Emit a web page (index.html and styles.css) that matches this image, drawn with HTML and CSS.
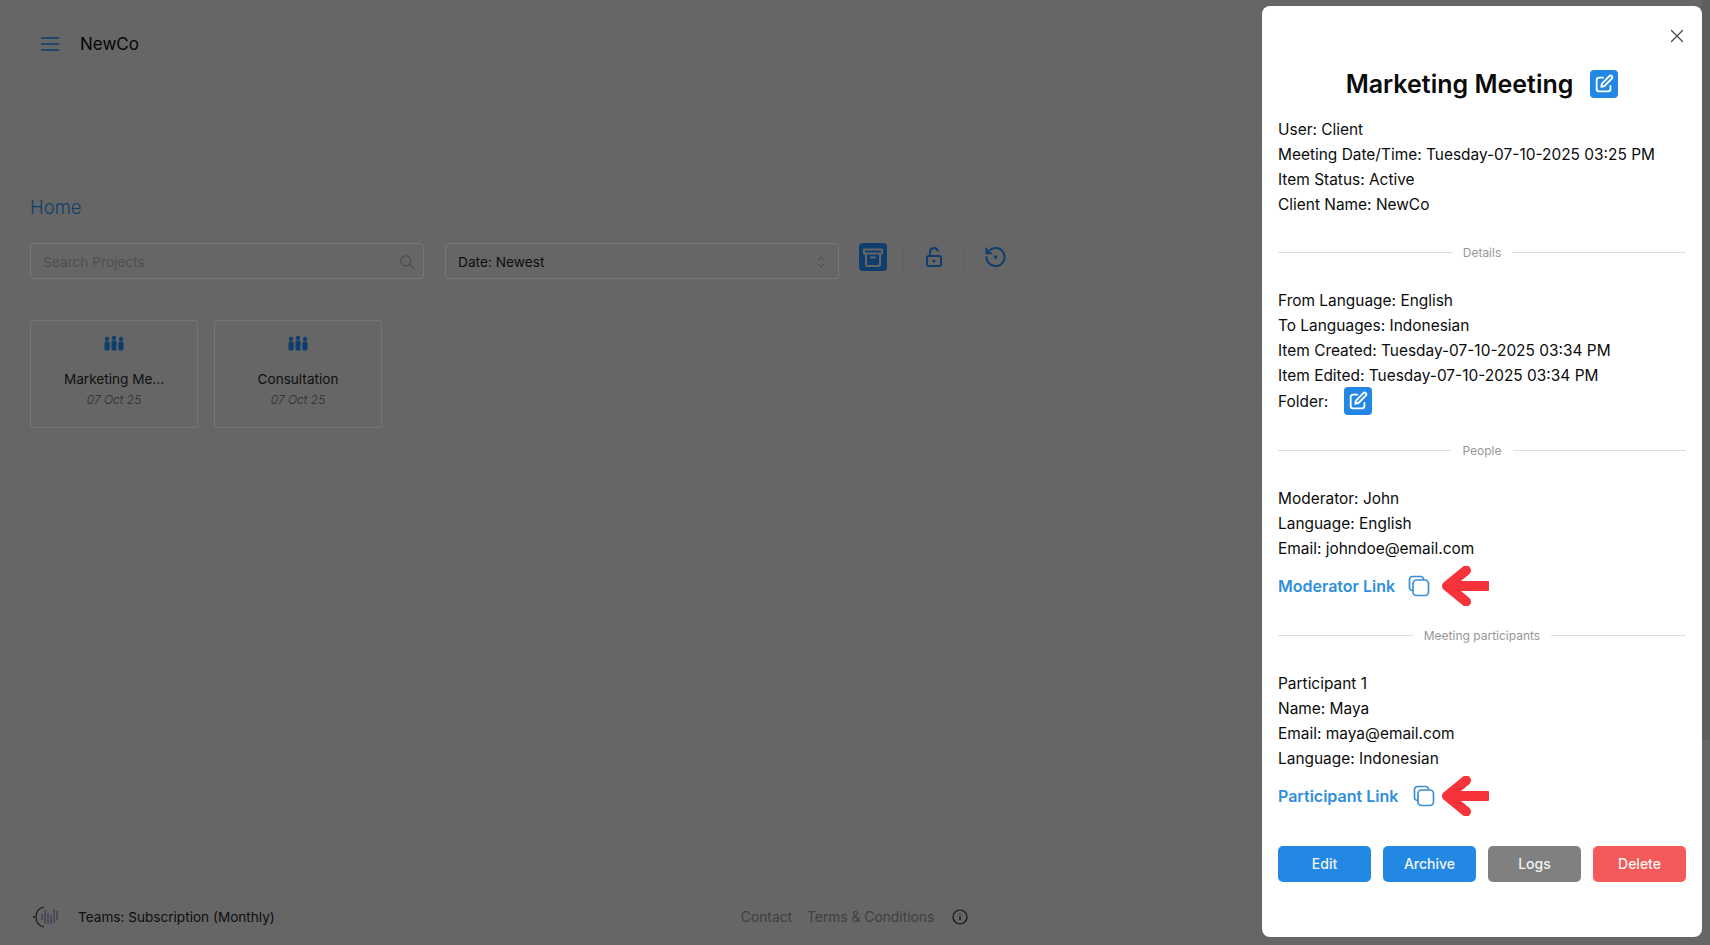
FILE: index.html
```html
<!DOCTYPE html>
<html lang="en">
<head>
<meta charset="utf-8">
<title>NewCo - Marketing Meeting</title>
<link rel="stylesheet" href="styles.css">
</head>
<body>
<div class="app">
  <header class="topbar">
    <button class="menu-btn" aria-label="Menu">
      <svg viewBox="0 0 20 16" width="20" height="16"><path d="M1 2h18M1 8h18M1 14h18" fill="none" stroke="currentColor" stroke-width="1.6"/></svg>
    </button>
    <span class="brand">NewCo</span>
  </header>
  <main class="content">
    <h1 class="crumb">Home</h1>
    <div class="toolbar">
      <div class="field field-search">
        <span class="placeholder">Search Projects</span>
        <svg class="field-icon" viewBox="0 0 16 16" width="16" height="16"><circle cx="6.800" cy="6.800" r="5" fill="none" stroke="currentColor" stroke-width="1.200"/><path d="M10.500 10.500l4 4" stroke="currentColor" stroke-width="1.200" stroke-linecap="round"/></svg>
      </div>
      <div class="field">
        <span class="value">Date: Newest</span>
        <svg class="field-icon" viewBox="0 0 10 16" width="10" height="16"><path d="M2 6l3-3 3 3M2 10l3 3 3-3" fill="none" stroke="currentColor" stroke-width="1"/></svg>
      </div>
      <div class="tools">
        <button class="tool tool-active" aria-label="Archive">
          <svg viewBox="0 0 24 24" width="24" height="24"><path d="M3 4.500h18v4H3zM5 8.500v11a1.500 1.500 0 0 0 1.500 1.500h11a1.500 1.500 0 0 0 1.500-1.500v-11M10 12.500h4" fill="none" stroke="currentColor" stroke-width="2" stroke-linejoin="round" stroke-linecap="round"/></svg>
        </button>
        <span class="tool-sep"></span>
        <button class="tool" aria-label="Unlock">
          <svg viewBox="0 0 24 24" width="24" height="24"><path d="M8 11V7a4 4 0 0 1 7.800-1.200" fill="none" stroke="currentColor" stroke-width="2" stroke-linecap="round"/><rect x="5" y="11" width="14" height="10" rx="2" fill="none" stroke="currentColor" stroke-width="2"/><circle cx="12" cy="16" r="1.500" fill="currentColor"/></svg>
        </button>
        <span class="tool-sep"></span>
        <button class="tool" aria-label="History">
          <svg viewBox="0 0 24 24" width="24" height="24"><path d="M3.500 12a9 9 0 1 0 2.700-6.400L3.500 8.200M3.500 3.500v4.700h4.700" fill="none" stroke="currentColor" stroke-width="2" stroke-linecap="round" stroke-linejoin="round"/><circle cx="12.500" cy="12" r="1.800" fill="currentColor"/></svg>
        </button>
      </div>
    </div>
    <div class="cards">
      <article class="card">
        <svg class="card-icon" viewBox="0 0 20 15" width="20" height="15"><g fill="currentColor"><circle cx="3" cy="3" r="2.200"/><rect x="0.500" y="5.500" width="5.200" height="9" rx="1.500"/><circle cx="10" cy="2" r="2.200"/><rect x="7.400" y="4.500" width="5.200" height="10" rx="1.500"/><circle cx="17" cy="3" r="2.200"/><rect x="14.300" y="5.500" width="5.200" height="9" rx="1.500"/></g></svg>
        <div class="card-title">Marketing Me...</div>
        <div class="card-date">07 Oct 25</div>
      </article>
      <article class="card">
        <svg class="card-icon" viewBox="0 0 20 15" width="20" height="15"><g fill="currentColor"><circle cx="3" cy="3" r="2.200"/><rect x="0.500" y="5.500" width="5.200" height="9" rx="1.500"/><circle cx="10" cy="2" r="2.200"/><rect x="7.400" y="4.500" width="5.200" height="10" rx="1.500"/><circle cx="17" cy="3" r="2.200"/><rect x="14.300" y="5.500" width="5.200" height="9" rx="1.500"/></g></svg>
        <div class="card-title">Consultation</div>
        <div class="card-date">07 Oct 25</div>
      </article>
    </div>
  </main>
  <footer class="footer">
    <svg class="foot-logo" viewBox="0 0 26 22" width="26" height="22"><path d="M11 1C6 2 3 6 3 11s3 9 8 10" fill="none" stroke="#1c1c1e" stroke-width="1.200"/><path d="M0 11h2" stroke="#1c1c1e" stroke-width="1.500"/><path d="M9 8v6M12 4v14M15 7v11M18 9v9M21 3v14M24 5v9" stroke="#3a3a55" stroke-width="1.200"/></svg>
    <span class="plan">Teams: Subscription (Monthly)</span>
    <nav class="foot-links">
      <a>Contact</a>
      <a>Terms &amp; Conditions</a>
      <svg class="info" viewBox="0 0 16 16" width="16" height="16"><circle cx="8" cy="8" r="7" fill="none" stroke="#111" stroke-width="1.200"/><path d="M8 7.200v4M8 4.500v1" stroke="#111" stroke-width="1.300"/></svg>
    </nav>
  </footer>
</div>
<div class="scroll-thumb"></div>

<aside class="drawer">
  <button class="close" aria-label="Close">
    <svg viewBox="0 0 14 14" width="14" height="14"><path d="M1.500 1.500l11 11M12.500 1.500l-11 11" stroke="currentColor" stroke-width="1.200" stroke-linecap="round"/></svg>
  </button>
  <div class="title-row">
    <h2 class="title">Marketing Meeting</h2>
    <button class="edit" aria-label="Edit title">
      <svg viewBox="0 0 24 24"><path d="M11 5H6.500A2.500 2.500 0 0 0 4 7.500v10A2.500 2.500 0 0 0 6.500 20h10a2.500 2.500 0 0 0 2.500-2.500V14" fill="none" stroke="currentColor" stroke-width="2" stroke-linecap="round"/><path d="M9 15l.8-3.500 8-8a1.900 1.900 0 0 1 2.700 2.700l-8 8z" fill="none" stroke="currentColor" stroke-width="2" stroke-linejoin="round"/></svg>
    </button>
  </div>
  <div class="lines">
    <p>User: Client</p>
    <p>Meeting Date/Time: Tuesday-07-10-2025 03:25 PM</p>
    <p>Item Status: Active</p>
    <p>Client Name: NewCo</p>
  </div>
  <div class="divider"><span>Details</span></div>
  <div class="lines">
    <p>From Language: English</p>
    <p>To Languages: Indonesian</p>
    <p>Item Created: Tuesday-07-10-2025 03:34 PM</p>
    <p>Item Edited: Tuesday-07-10-2025 03:34 PM</p>
    <div class="folder-row">
      <span>Folder:</span>
      <button class="edit" aria-label="Edit folder">
        <svg viewBox="0 0 24 24"><path d="M11 5H6.500A2.500 2.500 0 0 0 4 7.500v10A2.500 2.500 0 0 0 6.500 20h10a2.500 2.500 0 0 0 2.500-2.500V14" fill="none" stroke="currentColor" stroke-width="2" stroke-linecap="round"/><path d="M9 15l.8-3.500 8-8a1.900 1.900 0 0 1 2.700 2.700l-8 8z" fill="none" stroke="currentColor" stroke-width="2" stroke-linejoin="round"/></svg>
      </button>
    </div>
  </div>
  <div class="divider divider-people"><span>People</span></div>
  <div class="lines">
    <p>Moderator: John</p>
    <p>Language: English</p>
    <p>Email: johndoe@email.com</p>
  </div>
  <div class="link-row">
    <a class="link">Moderator Link</a>
    <svg class="copy" viewBox="0 0 22 22" width="22" height="22"><path d="M4 15.500A3 3 0 0 1 1.500 13V4.500a3 3 0 0 1 3-3H13a3 3 0 0 1 2.500 2.500" fill="none" stroke="currentColor" stroke-width="1.700" stroke-linecap="round"/><rect x="5" y="5" width="15.500" height="15.500" rx="3.500" fill="none" stroke="currentColor" stroke-width="1.700"/></svg>
    <svg class="arrow" viewBox="0 0 48 40" width="48" height="40"><path d="M46 20H6M25 4.500L6 20l19 15.500" fill="none" stroke="#f6333b" stroke-width="10" stroke-linecap="round" stroke-linejoin="round"/><path d="M40 15.500h8v9h-8z" fill="#f6333b"/></svg>
  </div>
  <div class="divider divider-meeting"><span>Meeting participants</span></div>
  <div class="lines">
    <p>Participant 1</p>
    <p>Name: Maya</p>
    <p>Email: maya@email.com</p>
    <p>Language: Indonesian</p>
  </div>
  <div class="link-row">
    <a class="link">Participant Link</a>
    <svg class="copy copy-part" viewBox="0 0 22 22" width="22" height="22"><path d="M4 15.500A3 3 0 0 1 1.500 13V4.500a3 3 0 0 1 3-3H13a3 3 0 0 1 2.500 2.500" fill="none" stroke="currentColor" stroke-width="1.700" stroke-linecap="round"/><rect x="5" y="5" width="15.500" height="15.500" rx="3.500" fill="none" stroke="currentColor" stroke-width="1.700"/></svg>
    <svg class="arrow" viewBox="0 0 48 40" width="48" height="40"><path d="M46 20H6M25 4.500L6 20l19 15.500" fill="none" stroke="#f6333b" stroke-width="10" stroke-linecap="round" stroke-linejoin="round"/><path d="M40 15.500h8v9h-8z" fill="#f6333b"/></svg>
  </div>
  <div class="actions">
    <button class="btn btn-blue">Edit</button>
    <button class="btn btn-blue">Archive</button>
    <button class="btn btn-gray">Logs</button>
    <button class="btn btn-red">Delete</button>
  </div>
</aside>
</body>
</html>
```
FILE: styles.css
```css
* { box-sizing: border-box; }
html, body { margin: 0; height: 100%; }
body {
  width: 1710px;
  height: 945px;
  overflow: hidden;
  position: relative;
  background: #666666;
  font-family: Inter, "Liberation Sans", sans-serif;
  color: #0c0c0c;
}
button { font-family: inherit; border: 0; padding: 0; background: none; }
p, h1, h2 { margin: 0; }

.app { display: flex; flex-direction: column; height: 945px; }

.topbar {
  height: 78px;
  flex: none;
  display: flex;
  align-items: center;
  padding: 11px 0 0 40px;
  gap: 20px;
  border-bottom: 1px solid #646464;
}
.menu-btn { display: flex; color: #0f3d6c; }
.brand { font-size: 17px; color: #050505; font-weight: 400; }

.content { flex: 1; padding: 117px 0 0 30px; }
.crumb { font-size: 18.500px; line-height: 24px; font-weight: 300; color: #0f3d6c; }
.toolbar { display: flex; align-items: flex-start; margin-top: 24px; }
.field {
  width: 394px;
  height: 36px;
  margin-right: 21px;
  border: 1px solid #787878;
  border-radius: 4px;
  display: flex;
  align-items: center;
  justify-content: space-between;
  padding: 1px 12px 0;
  font-size: 13.700px;
  color: #4e4e4e;
}
.field-search { padding-right: 8px; }
.placeholder { color: #4f4f4f; }
.value { color: #0d0d0d; }
.tools { display: flex; align-items: flex-start; margin-left: -1px; }
.tool { width: 28px; height: 28px; display: flex; align-items: center; justify-content: center; color: #0f3d6c; }
.tool-active { background: #0f3d6c; color: #666666; border-radius: 4px; }
.tool-sep { width: 1px; height: 30px; background: #616161; margin: 0 16px; }

.cards { display: flex; gap: 16px; margin-top: 41px; }
.card {
  width: 168px;
  height: 108px;
  border: 1px solid #757575;
  border-radius: 3px;
  display: flex;
  flex-direction: column;
  align-items: center;
  padding-top: 15px;
}
.card-icon { color: #0f3d6c; flex: none; }
.card-title { margin-top: 18px; font-size: 13.600px; line-height: 20px; color: #0f0f0f; }
.card-date { margin-top: 1px; font-size: 12px; line-height: 20px; font-style: italic; font-weight: 300; color: #2d2d2d; }

.footer {
  height: 58px;
  flex: none;
  display: flex;
  align-items: center;
  padding: 0 0 0 33px;
  border-top: 1px solid #646464;
}
.foot-logo { flex: none; }
.plan { margin-left: 19px; font-size: 13.600px; color: #0d0d0d; }
.foot-links { margin-left: 466px; display: flex; align-items: center; gap: 15px; font-size: 13.800px; color: #3f3f3f; }
.info { margin-left: 3px; }

.scroll-thumb { position: absolute; top: 0; right: 0; width: 8px; height: 740px; background: #5d5e60; }

.drawer {
  position: absolute;
  top: 6px;
  right: 8px;
  width: 440px;
  height: 931px;
  background: #ffffff;
  border-radius: 8px;
  padding: 63px 16px 0;
}
.close { position: absolute; top: 23px; right: 18px; display: flex; color: #444444; }
.title-row { display: flex; align-items: center; justify-content: center; gap: 17px; height: 30px; }
.title { font-size: 25px; font-weight: 600; line-height: 30px; color: #0a0a0a; }
.edit { width: 28px; height: 28px; background: #2288e4; color: #ffffff; border-radius: 4px; display: flex; align-items: center; justify-content: center; flex: none; }
.edit svg { width: 22px; height: 22px; }

.lines { font-size: 15.450px; line-height: 25px; color: #0c0c0c; }
.title-row + .lines { margin-top: 18px; }
.folder-row { display: flex; align-items: center; gap: 16px; height: 28px; margin-top: -1px; }

.divider {
  display: flex;
  align-items: center;
  gap: 11px;
  font-size: 12px;
  line-height: 16px;
  color: #979797;
  margin: 27.500px 0 27.500px;
}
.divider::before, .divider::after { content: ""; flex: 1; height: 1px; background: #dcdcdc; }
.divider-people { margin: 27.500px 0 27px; }
.divider-meeting { margin: 30px 0 27px; }

.link-row { position: relative; display: flex; align-items: center; height: 24px; margin-top: 13px; }
.link { font-size: 16px; font-weight: 600; color: #2f8fdc; }
.copy { color: #3c8fd6; margin-left: 13px; flex: none; }
.copy-part { margin-left: 15px; }
.arrow { position: absolute; left: 163px; top: -8px; }

.actions { display: flex; gap: 12px; margin-top: 38px; }
.btn { flex: 1; height: 36px; border-radius: 5px; color: #f4f4f4; font-size: 14px; font-weight: 500; }
.btn-blue { background: #2288e4; }
.btn-gray { background: #808080; }
.btn-red { background: #f55a5a; }
```
